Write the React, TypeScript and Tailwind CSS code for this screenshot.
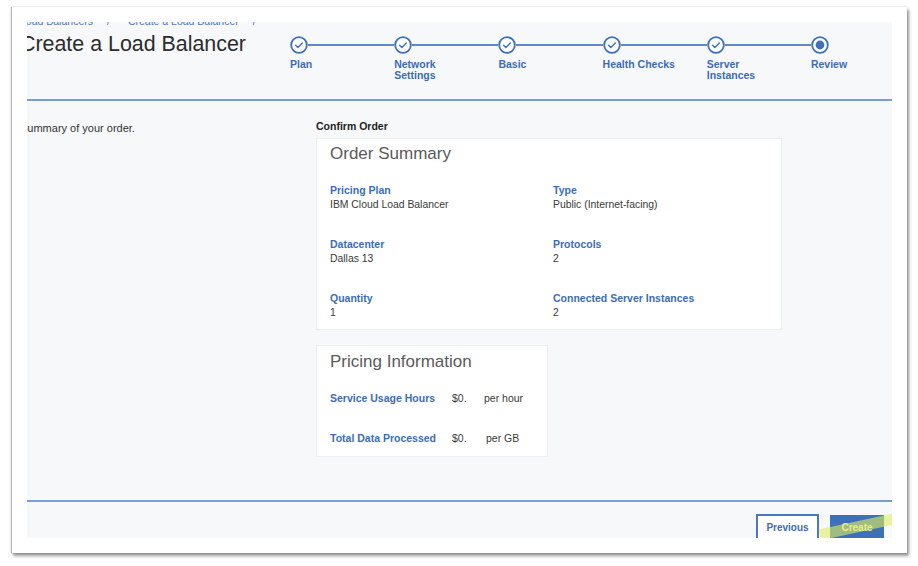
const steps = [
  { label: ['Plan'], done: true },
  { label: ['Network', 'Settings'], done: true },
  { label: ['Basic'], done: true },
  { label: ['Health Checks'], done: true },
  { label: ['Server', 'Instances'], done: true },
  { label: ['Review'], done: false },
]

function StepIcon({ done }: { done: boolean }) {
  return (
    <svg width="18" height="18" viewBox="0 0 18 18" className="shrink-0">
      <circle cx="9" cy="9" r="7.8" fill="#fff" stroke="#3f6fba" strokeWidth="1.8" />
      {done ? (
        <path d="M5.6 9.3l2.3 2.2 4.4-4.6" fill="none" stroke="#3f6fba" strokeWidth="1.4" strokeLinecap="round" strokeLinejoin="round" />
      ) : (
        <circle cx="9" cy="9" r="4.4" fill="#3f6fba" />
      )}
    </svg>
  )
}

function Stepper() {
  return (
    <div className="flex pt-[14px]">
      {steps.map((s, i) => {
        const last = i === steps.length - 1
        return (
          <div key={i} className={last ? 'w-[60px]' : 'w-[104.2px]'}>
            <div className="flex items-center">
              <StepIcon done={s.done} />
              {!last && <div className="h-[2px] flex-1 bg-[#5f88c9]" />}
            </div>
            <div className="mt-[5px] text-[10.5px] leading-[11px] font-bold text-[#3d6cb6]">
              {s.label.map((l, j) => (
                <div key={j}>{l}</div>
              ))}
            </div>
          </div>
        )
      })}
    </div>
  )
}

function Field({ label, value }: { label: string; value: string }) {
  return (
    <div className="h-[54px]">
      <div className="text-[10.5px] leading-[14px] font-bold text-[#3d6cb6]">{label}</div>
      <div className="mt-[1px] text-[10.4px] leading-[14px] text-[#3a3a3a]">{value}</div>
    </div>
  )
}

export default function App() {
  return (
    <div className="min-h-screen bg-white pl-[11px] pt-[7px]" style={{ fontFamily: '"Liberation Sans", Arial, sans-serif' }}>
      <div className="w-[896px] h-[546px] p-[15px] bg-white border-l border-[#b8b8b8] shadow-[0_0_2px_rgba(0,0,0,0.2),2px_3px_3px_rgba(0,0,0,0.4)]">
        <div className="relative flex h-[516px] flex-col overflow-hidden bg-[#f7f8fa]">
          {/* header */}
          <div className="flex h-[77px]">
            <div className="ml-[-7px] w-[270px]">
              <div className="mt-[-8px] flex gap-[14px] text-[10.5px] leading-[14px] text-[#4a78c0]">
                <span>Load Balancers</span>
                <span>/</span>
                <span className="ml-[4px]">Create a Load Balancer</span>
                <span>/</span>
              </div>
              <h1 className="mt-[3px] text-[21.4px] leading-[26px] text-[#2c2c2c] whitespace-nowrap">Create a Load Balancer</h1>
            </div>
            <Stepper />
          </div>
          <div className="h-[2px] bg-[#7a9dd5]" />

          {/* content */}
          <div className="flex flex-1 pt-[18px]">
            <div className="ml-[-7px] w-[296px] text-[11px] leading-[14px] text-[#333] pt-[2px]">Summary of your order.</div>
            <div>
              <div className="text-[10.5px] leading-[14px] font-bold text-[#222]">Confirm Order</div>
              <div className="mt-[5px] w-[466px] h-[192px] bg-white border border-[#eceef2] pl-[13px] pt-[4px]">
                <div className="text-[17px] leading-[22px] font-light text-[#5a5a5a]">Order Summary</div>
                <div className="mt-[18px] grid grid-cols-[223px_1fr]">
                  <Field label="Pricing Plan" value="IBM Cloud Load Balancer" />
                  <Field label="Type" value="Public (Internet-facing)" />
                  <Field label="Datacenter" value="Dallas 13" />
                  <Field label="Protocols" value="2" />
                  <Field label="Quantity" value="1" />
                  <Field label="Connected Server Instances" value="2" />
                </div>
              </div>
              <div className="mt-[15px] w-[232px] h-[112px] bg-white border border-[#eceef2] pl-[13px] pt-[5px]">
                <div className="text-[17px] leading-[22px] font-light text-[#5a5a5a]">Pricing Information</div>
                <div className="mt-[18px] flex h-[40px] text-[10.5px] leading-[14px]">
                  <span className="w-[122px] font-bold text-[#3d6cb6]">Service Usage Hours</span>
                  <span className="w-[32px] text-[#3a3a3a]">$0.</span>
                  <span className="text-[#3a3a3a]">per hour</span>
                </div>
                <div className="flex text-[10.5px] leading-[14px]">
                  <span className="w-[122px] font-bold text-[#3d6cb6]">Total Data Processed</span>
                  <span className="w-[34px] text-[#3a3a3a]">$0.</span>
                  <span className="text-[#3a3a3a]">per GB</span>
                </div>
              </div>
            </div>
          </div>

          <div className="h-[2px] bg-[#7a9dd5]" />
          {/* footer */}
          <div className="flex h-[36px] justify-end gap-[11px] pt-[12px] pr-[8px]">
            <button className="h-[26px] w-[63px] border-2 border-[#4a78c0] bg-white text-[10px] font-bold text-[#3d6cb6]">Previous</button>
            <div className="relative">
              <button className="h-[26px] w-[54px] bg-[#3d70b6] text-[10px] font-bold text-[#e9efc2]">Create</button>
              <div className="absolute left-[-11px] top-[7px] h-[11px] w-[80px] -rotate-[12deg] bg-[#e4ee5c]/60" />
            </div>
          </div>
        </div>
      </div>
    </div>
  )
}
